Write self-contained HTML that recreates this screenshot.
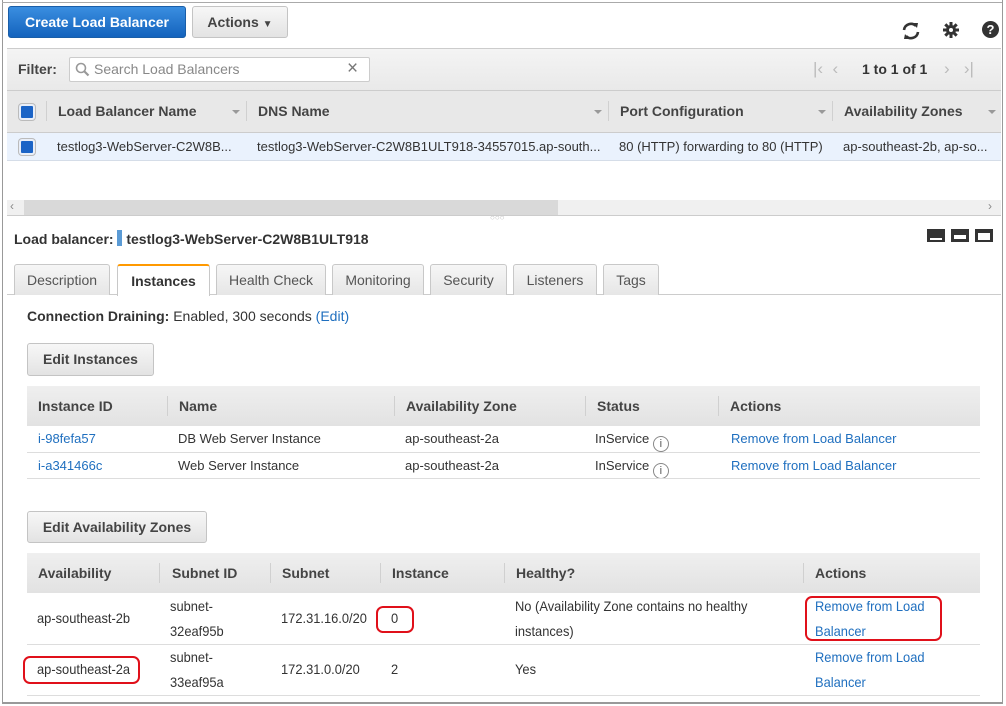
<!DOCTYPE html>
<html><head><meta charset="utf-8"><style>
*{box-sizing:border-box;margin:0;padding:0}
body{width:1006px;height:706px;overflow:hidden;background:#fff;font-family:"Liberation Sans",Arial,sans-serif;font-size:14px;color:#333;position:relative}
.a{position:absolute;white-space:nowrap}
.b{font-weight:bold;color:#444}
.btn{position:absolute;border:1px solid #c4c4c4;border-radius:3px;background:linear-gradient(#f7f7f7,#e3e3e3);font-weight:bold;color:#444;font-size:14px;text-align:center}
.lnk{color:#1f6fbf}
.sep{position:absolute;width:1px;background:#d0d0d0}
.hl{position:absolute;height:1px;background:#ddd}
.red{position:absolute;border:2px solid #e0101a;border-radius:7px}
.tab{position:absolute;top:264px;height:31px;border:1px solid #c8c8c8;border-bottom:none;border-radius:3px 3px 0 0;background:linear-gradient(#f6f6f6,#e6e6e6);font-size:14px;color:#555;text-align:center;line-height:30px}
.cb{position:absolute;width:16px;height:16px;border-radius:3px;background:#1a63c6;border:2px solid #e8eef8;box-shadow:0 0 0 1px #bbb}
.caret{position:absolute;width:0;height:0;border-left:4px solid transparent;border-right:4px solid transparent;border-top:4px solid #999}
.ic{position:absolute;width:18px;height:13px;background:#333}
.n{font-size:14px;transform:scaleX(.92);transform-origin:left}
.r{font-size:13px}
.info{display:inline-block;width:16px;height:16px;border:1px solid #888;border-radius:50%;font-size:11px;text-align:center;line-height:14px;color:#555;vertical-align:-4px}
</style></head><body>
<div class="a" style="left:2px;top:0;width:1px;height:704px;background:#999"></div>
<div class="a" style="left:1002px;top:0;width:1px;height:704px;background:#999"></div>
<div class="a" style="left:2px;top:2px;width:1000px;height:1px;background:#aaa"></div>
<div class="a" style="left:2px;top:702px;width:1000px;height:2px;background:#999"></div>

<div class="btn" style="left:8px;top:6px;width:178px;height:32px;line-height:30px;background:linear-gradient(#3a8ee0,#1463bd);border-color:#1a5ea8;color:#fff">Create Load Balancer</div>
<div class="btn" style="left:192px;top:6px;width:96px;height:32px;line-height:30px">Actions <span style="font-size:10px">&#9660;</span></div>
<svg class="a" style="left:900px;top:21px" width="22" height="20" viewBox="0 0 22 20"><path d="M4 9a7 7 0 0 1 12-4" fill="none" stroke="#333" stroke-width="2.6"/><path d="M13 2l5 0-1 5z" fill="#333"/><path d="M18 11a7 7 0 0 1-12 4" fill="none" stroke="#333" stroke-width="2.6"/><path d="M9 18l-5 0 1-5z" fill="#333"/></svg>
<svg class="a" style="left:943px;top:22px" width="16" height="16" viewBox="0 0 16 16"><circle cx="8" cy="8" r="5" fill="#333"/><g stroke="#333" stroke-width="3"><path d="M8 0v16M0 8h16M2.3 2.3l11.4 11.4M13.7 2.3L2.3 13.7"/></g><circle cx="8" cy="8" r="2" fill="#fff"/></svg>
<div class="a" style="left:982px;top:21px;width:17px;height:17px;border-radius:50%;background:#333;color:#fff;font-weight:bold;font-size:13px;text-align:center;line-height:17px">?</div>

<div class="a" style="left:7px;top:48px;width:994px;height:43px;background:linear-gradient(#f4f4f4,#e9e9e9);border-top:1px solid #ccc;border-bottom:1px solid #ccc"></div>
<div class="a b" style="left:18px;top:61px">Filter:</div>
<div class="a" style="left:69px;top:57px;width:301px;height:25px;background:#fff;border:1px solid #ccc;border-radius:2px"></div>
<svg class="a" style="left:75px;top:62px" width="15" height="15" viewBox="0 0 15 15"><circle cx="6" cy="6" r="4.5" fill="none" stroke="#999" stroke-width="1.6"/><path d="M9.5 9.5l4 4" stroke="#999" stroke-width="2.2"/></svg>
<div class="a" style="left:94px;top:61px;color:#888">Search Load Balancers</div>
<div class="a" style="left:347px;top:58px;color:#777;font-size:19px">×</div>
<div class="a" style="left:813px;top:59px;color:#bbb;font-size:17px">|&lsaquo;&nbsp;&nbsp;&lsaquo;</div>
<div class="a b" style="left:862px;top:61px;color:#333">1 to 1 of 1</div>
<div class="a" style="left:944px;top:59px;color:#bbb;font-size:17px">&rsaquo;&nbsp;&nbsp;&nbsp;&rsaquo;|</div>

<div class="a" style="left:7px;top:91px;width:994px;height:42px;background:#e8e8e8;border-bottom:1px solid #ccc"></div>
<div class="cb" style="left:19px;top:104px"></div>
<div class="sep" style="left:46px;top:101px;height:20px"></div>
<div class="a b" style="left:58px;top:103px">Load Balancer Name</div><div class="caret" style="left:232px;top:110px"></div>
<div class="sep" style="left:246px;top:101px;height:20px"></div>
<div class="a b" style="left:258px;top:103px">DNS Name</div><div class="caret" style="left:594px;top:110px"></div>
<div class="sep" style="left:608px;top:101px;height:20px"></div>
<div class="a b" style="left:620px;top:103px">Port Configuration</div><div class="caret" style="left:818px;top:110px"></div>
<div class="sep" style="left:832px;top:101px;height:20px"></div>
<div class="a b" style="left:844px;top:103px">Availability Zones</div><div class="caret" style="left:988px;top:110px"></div>
<div class="a" style="left:7px;top:133px;width:994px;height:28px;background:#eaf2fd;border-bottom:1px solid #d5dde8"></div>
<div class="cb" style="left:19px;top:139px"></div>
<div class="a r" style="left:57px;top:139px">testlog3-WebServer-C2W8B...</div>
<div class="a r" style="left:257px;top:139px">testlog3-WebServer-C2W8B1ULT918-34557015.ap-south...</div>
<div class="a r" style="left:619px;top:139px">80 (HTTP) forwarding to 80 (HTTP)</div>
<div class="a r" style="left:843px;top:139px">ap-southeast-2b, ap-so...</div>
<div class="a" style="left:7px;top:200px;width:994px;height:16px;background:#f0f0f0;border-bottom:1px solid #ccc"></div>
<div class="a" style="left:24px;top:200px;width:534px;height:15px;background:#d9d9d9"></div>
<div class="a" style="left:10px;top:199px;color:#888;font-size:12px">&lsaquo;</div>
<div class="a" style="left:988px;top:199px;color:#888;font-size:12px">&rsaquo;</div>
<div class="a" style="left:490px;top:213px;color:#bbb;font-size:8px">&#9675;&#9675;&#9675;</div>

<div class="a b" style="left:14px;top:230px;color:#333">Load balancer: <span style="display:inline-block;width:5px;height:16px;background:#5b9bd5;vertical-align:-2px"></span> testlog3-WebServer-C2W8B1ULT918</div>
<div class="ic" style="left:927px;top:229px"><div style="position:absolute;left:3px;bottom:2px;width:12px;height:2px;background:#fff"></div></div>
<div class="ic" style="left:951px;top:229px"><div style="position:absolute;left:3px;top:6px;width:12px;height:4px;background:#fff"></div></div>
<div class="ic" style="left:975px;top:229px"><div style="position:absolute;left:3px;top:4px;width:12px;height:7px;background:#fff"></div></div>

<div class="a" style="left:7px;top:294px;width:994px;height:1px;background:#ccc"></div>
<div class="tab" style="left:14px;width:96px">Description</div>
<div class="tab" style="left:117px;width:93px;background:#fff;border-top:2px solid #f90;height:32px;font-weight:bold;color:#333">Instances</div>
<div class="tab" style="left:216px;width:110px">Health Check</div>
<div class="tab" style="left:332px;width:92px">Monitoring</div>
<div class="tab" style="left:430px;width:77px">Security</div>
<div class="tab" style="left:513px;width:84px">Listeners</div>
<div class="tab" style="left:603px;width:56px">Tags</div>

<div class="a" style="left:27px;top:308px"><b style="color:#333">Connection Draining:</b> Enabled, 300 seconds <span class="lnk">(Edit)</span></div>
<div class="btn" style="left:27px;top:343px;width:127px;height:33px;line-height:31px">Edit Instances</div>

<div class="a" style="left:27px;top:386px;width:953px;height:40px;background:linear-gradient(#efefef,#e2e2e2)"></div>
<div class="a b" style="left:38px;top:398px">Instance ID</div>
<div class="sep" style="left:167px;top:396px;height:20px"></div>
<div class="a b" style="left:179px;top:398px">Name</div>
<div class="sep" style="left:394px;top:396px;height:20px"></div>
<div class="a b" style="left:406px;top:398px">Availability Zone</div>
<div class="sep" style="left:585px;top:396px;height:20px"></div>
<div class="a b" style="left:597px;top:398px">Status</div>
<div class="sep" style="left:718px;top:396px;height:20px"></div>
<div class="a b" style="left:730px;top:398px">Actions</div>
<div class="a r" style="left:38px;top:431px"><span class="lnk">i-98fefa57</span></div>
<div class="a r" style="left:178px;top:431px">DB Web Server Instance</div>
<div class="a r" style="left:405px;top:431px">ap-southeast-2a</div>
<div class="a r" style="left:595px;top:431px">InService <span class="info">i</span></div>
<div class="a lnk r" style="left:731px;top:431px">Remove from Load Balancer</div>
<div class="hl" style="left:27px;top:452px;width:953px"></div>
<div class="a r" style="left:38px;top:458px"><span class="lnk">i-a341466c</span></div>
<div class="a r" style="left:178px;top:458px">Web Server Instance</div>
<div class="a r" style="left:405px;top:458px">ap-southeast-2a</div>
<div class="a r" style="left:595px;top:458px">InService <span class="info">i</span></div>
<div class="a lnk r" style="left:731px;top:458px">Remove from Load Balancer</div>
<div class="hl" style="left:27px;top:478px;width:953px"></div>

<div class="btn" style="left:27px;top:511px;width:180px;height:32px;line-height:30px">Edit Availability Zones</div>
<div class="a" style="left:27px;top:553px;width:953px;height:40px;background:linear-gradient(#efefef,#e2e2e2)"></div>
<div class="a b" style="left:38px;top:565px">Availability</div>
<div class="sep" style="left:159px;top:563px;height:20px"></div>
<div class="a b" style="left:172px;top:565px">Subnet ID</div>
<div class="sep" style="left:270px;top:563px;height:20px"></div>
<div class="a b" style="left:282px;top:565px">Subnet</div>
<div class="sep" style="left:380px;top:563px;height:20px"></div>
<div class="a b" style="left:392px;top:565px">Instance</div>
<div class="sep" style="left:504px;top:563px;height:20px"></div>
<div class="a b" style="left:516px;top:565px">Healthy?</div>
<div class="sep" style="left:803px;top:563px;height:20px"></div>
<div class="a b" style="left:815px;top:565px">Actions</div>

<div class="a n" style="left:37px;top:610px">ap-southeast-2b</div>
<div class="a n" style="left:170px;top:594px;line-height:25px">subnet-<br>32eaf95b</div>
<div class="a n" style="left:281px;top:610px">172.31.16.0/20</div>
<div class="a n" style="left:391px;top:610px">0</div>
<div class="a n" style="left:515px;top:594px;line-height:25px">No (Availability Zone contains no healthy<br>instances)</div>
<div class="a n lnk" style="left:815px;top:594px;line-height:25px">Remove from Load<br>Balancer</div>
<div class="hl" style="left:27px;top:644px;width:953px"></div>
<div class="a n" style="left:37px;top:661px">ap-southeast-2a</div>
<div class="a n" style="left:170px;top:645px;line-height:25px">subnet-<br>33eaf95a</div>
<div class="a n" style="left:281px;top:661px">172.31.0.0/20</div>
<div class="a n" style="left:391px;top:661px">2</div>
<div class="a n" style="left:515px;top:661px">Yes</div>
<div class="a n lnk" style="left:815px;top:645px;line-height:25px">Remove from Load<br>Balancer</div>
<div class="hl" style="left:27px;top:695px;width:953px"></div>

<div class="red" style="left:376px;top:606px;width:38px;height:27px"></div>
<div class="red" style="left:805px;top:596px;width:137px;height:45px"></div>
<div class="red" style="left:23px;top:656px;width:117px;height:28px"></div>
</body></html>
